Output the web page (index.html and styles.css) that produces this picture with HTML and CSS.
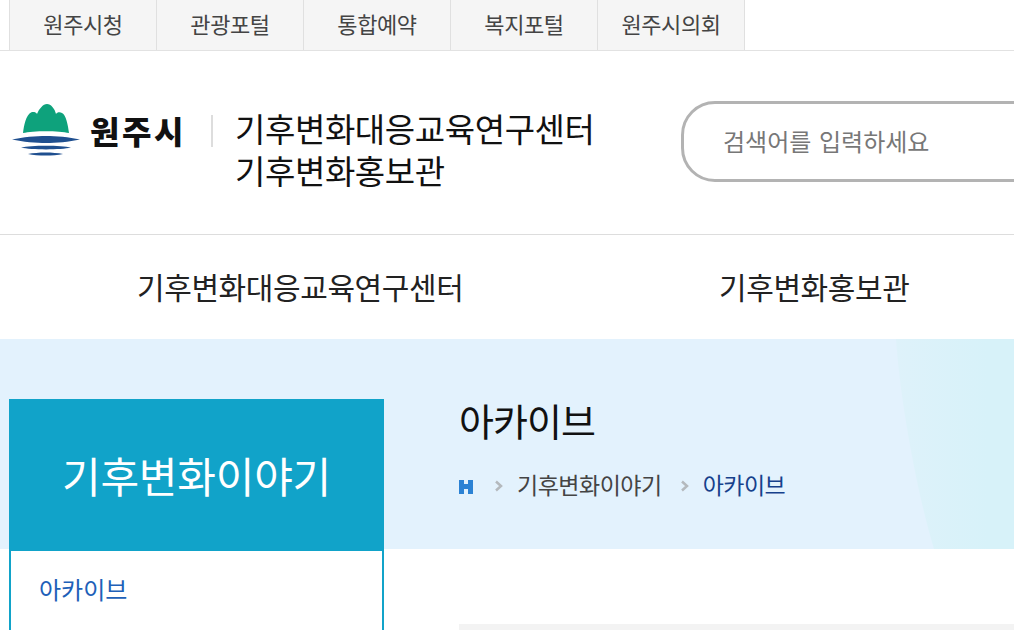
FILE: index.html
```html
<!DOCTYPE html>
<html lang="ko">
<head>
    <meta charset="UTF-8">
    <meta name="viewport" content="width=device-width, initial-scale=1.0">
    <link rel="stylesheet" href="styles.css">
    <title>아카이브 - 기후변화이야기</title>
</head>
<body>
    <div class="topbar">
        <a class="top-link" href="#">원주시청</a>
        <a class="top-link" href="#">관광포털</a>
        <a class="top-link" href="#">통합예약</a>
        <a class="top-link" href="#">복지포털</a>
        <a class="top-link" href="#">원주시의회</a>
    </div>
    <header class="header">
        <a class="logo" href="#">
            <svg class="logo-mark" width="70" height="52" viewBox="0 0 70 52">
                <path fill="#0ea27c" d="M12 29 C13 21 15 11 20 8.5 C22 7.5 25 8 26 10 C28 5 32 0 36 0 C40 0 44 5 45 10 C46 8 49 7.500 51 9 C55 11 57 21 58 29 C48 26.500 22 26.500 12 29 Z"/>
                <path fill="#1f4f8f" d="M1 35.500 C12 33 25 32 35 32 C45 32 58 33 69 35.500 C58 38 45 39 35 39 C25 39 12 38 1 35.500 Z"/>
                <path fill="#1f4f8f" d="M10 43.500 C20 41 50 41 60 43.500 C50 46 20 46 10 43.500 Z"/>
                <path fill="#1f4f8f" d="M17 50 C27 48 42 48 52 50 C42 52 27 52 17 50 Z"/>
            </svg>
            <span class="logo-name">원주시</span>
        </a>
        <span class="divider"></span>
        <div class="site-title">기후변화대응교육연구센터<br>기후변화홍보관</div>
        <div class="search">검색어를 입력하세요</div>
    </header>
    <nav class="nav">
        <a class="nav-one" href="#">기후변화대응교육연구센터</a>
        <a class="nav-two" href="#">기후변화홍보관</a>
    </nav>
    <div class="band">
        <div class="band-shape"></div>
    </div>
    <div class="main">
        <aside class="side">
            <h2 class="side-title">기후변화이야기</h2>
            <ul class="side-menu">
                <li><a href="#">아카이브</a></li>
            </ul>
        </aside>
        <section class="content">
            <h1 class="page-title">아카이브</h1>
            <div class="crumbs">
                <svg class="home" width="14" height="14" viewBox="0 0 14 14"><path fill="#2b82d4" d="M0 0H5V4H9V0H14V14H9V9H5V14H0Z"/></svg>
                <svg class="sep" width="9" height="12" viewBox="0 0 9 12"><path fill="none" stroke="#b4b9bd" stroke-width="2.500" d="M2 1.500L7 6L2 10.500"/></svg>
                <span>기후변화이야기</span>
                <svg class="sep" width="9" height="12" viewBox="0 0 9 12"><path fill="none" stroke="#b4b9bd" stroke-width="2.500" d="M2 1.500L7 6L2 10.500"/></svg>
                <span class="now">아카이브</span>
            </div>
            <div class="board-top"></div>
        </section>
    </div>
</body>
</html>
```

FILE: styles.css
```css
* {
  box-sizing: border-box;
}
html, body {
  height: 630px;
  overflow: hidden;
}
body {
  margin: 0;
  background: #fff;
  color: #222;
  font-family: "Noto Sans CJK KR", "Noto Sans", sans-serif;
  position: relative;
}
a {
  color: inherit;
  text-decoration: none;
}
.topbar {
  display: flex;
  height: 51px;
  padding-left: 9px;
  border-bottom: 1px solid #e2e2e2;
}
.top-link {
  width: 147px;
  background: #f5f5f5;
  border-left: 1px solid #e0e0e0;
  color: #444;
  font-size: 22px;
  line-height: 46px;
  text-align: center;
  letter-spacing: -0.4px;
}
.top-link:last-child {
  width: 148px;
  border-right: 1px solid #e0e0e0;
}
.header {
  display: flex;
  align-items: center;
  height: 184px;
  border-bottom: 1px solid #ddd;
  padding-left: 11px;
  overflow: hidden;
}
.logo {
  display: flex;
  flex: none;
  align-items: center;
  gap: 9px;
  width: 172px;
  margin-bottom: 26px;
}
.logo-mark {
  flex: none;
}
.logo-name {
  font-size: 32px;
  font-weight: 900;
  color: #111;
  letter-spacing: 2.5px;
  line-height: 1;
  white-space: nowrap;
}
.divider {
  flex: none;
  width: 2px;
  height: 32px;
  background: #ddd;
  margin: 0 22px 24px 28px;
}
.site-title {
  flex: none;
  width: 446px;
  margin-top: 12px;
  font-size: 33px;
  line-height: 42px;
  color: #111;
  letter-spacing: -0.4px;
  white-space: nowrap;
}
.search {
  flex: none;
  width: 400px;
  height: 81px;
  margin-bottom: 2px;
  border: 3px solid #b3b3b3;
  border-radius: 34px;
  padding-left: 39px;
  color: #777;
  font-size: 24px;
  line-height: 74px;
  word-spacing: 1px;
}
.nav {
  display: flex;
  height: 104px;
  font-size: 30px;
  line-height: 102px;
  color: #222;
  letter-spacing: -0.4px;
}
.nav-one {
  margin-left: 137px;
  width: 582px;
}
.band {
  position: absolute;
  top: 339px;
  left: 0;
  width: 1014px;
  height: 210px;
  background: #e3f2fd;
  overflow: hidden;
}
.band-shape {
  position: absolute;
  top: 0;
  left: 896px;
  width: 260px;
  height: 210px;
  background: linear-gradient(90deg, #def2fa, #d7f2f9 35%);
  clip-path: path("M0 0 C4 60 20 150 38 210 L260 210 L260 0 Z");
}
.main {
  position: relative;
  display: flex;
  padding: 60px 0 0 9px;
}
.side {
  flex: none;
  width: 375px;
}
.side-title {
  margin: 0;
  height: 152px;
  background: #11a3c9;
  color: #fff;
  font-size: 42px;
  font-weight: 400;
  line-height: 152px;
  text-align: center;
  letter-spacing: -0.2px;
}
.side-menu {
  list-style: none;
  margin: 0;
  padding: 19px 0 0 28px;
  height: 79px;
  border-left: 2px solid #11a3c9;
  border-right: 2px solid #11a3c9;
  color: #2060b8;
  font-size: 24px;
  line-height: 38px;
}
.content {
  flex: 1;
  padding-left: 75px;
}
.page-title {
  margin: -2px 0 0;
  font-size: 38px;
  font-weight: 400;
  line-height: 46px;
  color: #111;
  letter-spacing: -1px;
}
.crumbs {
  display: flex;
  align-items: center;
  margin-top: 26px;
  height: 30px;
  font-size: 23px;
  color: #444;
  letter-spacing: -0.5px;
}
.home {
  margin: 6px 21px 0 0;
}
.sep {
  margin: 4px 14px 0 0;
}
.crumbs span {
  margin-right: 18px;
}
.crumbs .now {
  color: #16418c;
}
.board-top {
  margin-top: 125px;
  height: 6px;
  background: #f3f3f3;
}
```
